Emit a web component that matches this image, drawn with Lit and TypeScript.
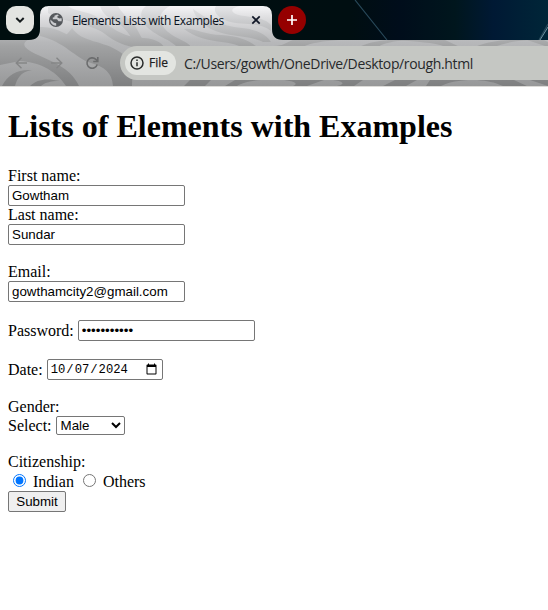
import { LitElement, html, css, svg } from "lit";
import { customElement } from "lit/decorators.js";

const frame =
  "M0 40H29Q40 40 40 29V15Q40 6 49 6H263Q272 6 272 15V29Q272 40 283 40H548V86H0Z";

const swirls = [
  "M40 27C58 26 70 38 86 43C100 48 116 51 122 63L127 86H113C112 72 104 67 91 63C75 58 65 42 40 36Z",
  "M0 40H28C20 44 26 50 38 55C56 63 72 70 79 86H66C55 69 37 62 20 61L0 65Z",
  "M63 38C67 34 70 31 72 28C82 43 103 40 120 52C132 60 133 70 132 86H126C124 69 115 61 100 56C86 52 76 43 63 38Z",
  "M48 6H68C75 12 90 11 98 18C112 27 120 37 144 38C158 39 163 44 166 50H151C134 47 121 47 105 34C91 23 67 24 48 13Z",
  "M100 6H118C123 16 133 20 138 31C143 42 149 47 157 51H142C133 41 128 30 118 23C109 18 103 15 100 6Z",
  "M146 6H170C157 13 158 23 168 32C178 40 188 41 192 48H178C170 38 147 34 142 19C140 13 142 9 146 6Z",
  "M184 29C193 27 205 35 221 35C239 36 251 41 258 48H243C229 39 205 45 184 29Z",
  "M193 9C205 18 221 26 242 28C256 29 267 35 271 42H263C248 34 220 38 205 25C199 20 194 15 193 9Z",
  "M216 6H240C226 9 233 15 245 16C258 18 266 19 271 25V31C258 21 242 26 227 21C219 18 212 12 216 6Z",
  "M2 86C8 74 18 69 32 70C20 72 17 79 15 86Z",
  "M30 86C37 79 47 78 60 81C50 81 44 83 41 86Z",
  "M274 46C283 46 287 42 293 40H339C324 41 310 43 303 47Z",
  "M359 47C370 42 381 40 393 40H408C394 41 384 43 378 47Z",
  "M399 40H445L460 47H446C433 42 416 42 399 40Z",
  "M475 47C487 42 499 40 514 40H530C515 41 504 43 494 47Z",
  "M527 40H544L548 42V47Z",
  "M190 80H211L205 86H184Z",
  "M235 80H261C249 81 242 83 237 86H225Z",
  "M284 80H324L307 86H293C300 83 292 81 284 80Z",
  "M333 80H363L354 86H337C347 84 342 81 333 80Z",
  "M395 80H417L406 86H383Z",
  "M430 80H468C454 81 447 83 441 86H426Z",
  "M477 80H514L527 86H503C494 82 487 81 477 80Z",
  "M530 80H548V86Z",
];

@customElement("app-root")
export class AppRoot extends LitElement {
  static styles = css`
    :host {
      display: block;
      width: 548px;
      height: 610px;
      overflow: hidden;
      background: #fff;
      color: #000;
      font: 16px/18px "Liberation Serif", serif;
    }
    * { box-sizing: border-box; }
    .chrome { position: relative; height: 87px; border-bottom: 1px solid #dcdbd8; font-family: "Open Sans", "Noto Sans", sans-serif; }
    .theme { position: absolute; inset: 0; display: block; }
    .bar { position: relative; display: flex; align-items: center; }
    .tabs { height: 40px; padding-left: 6px; }
    .search { display: grid; place-items: center; width: 28px; height: 28px; border-radius: 10px; background: #e3e5e1; }
    .tab { display: flex; align-items: center; width: 232px; height: 34px; margin: 0 4px 0 6px; padding-left: 9px; color: #071020; }
    .title { width: 179px; margin-left: 9px; padding-top: 1px; font-size: 12px; letter-spacing: -0.42px; white-space: nowrap; }
    .add { display: grid; place-items: center; width: 28px; height: 28px; margin-left: 2px; border-radius: 50%; background: #950000; }
    .tools { height: 46px; padding-left: 15px; }
    .nav { width: 14px; height: 14px; margin-right: 21px; flex: none; }
    .address { display: flex; align-items: center; flex: 1; height: 34px; border-radius: 17px 0 0 17px; background: #c5c7c3; padding-left: 5px; }
    .file { display: flex; align-items: center; width: 51px; height: 24px; border-radius: 12px; background: #e3e5e1; padding-left: 5px; font-size: 12px; color: #1f2021; -webkit-text-stroke: 0.25px; }
    .file svg { margin-right: 5px; flex: none; }
    .url { margin-left: 8px; padding-top: 1px; font-size: 14px; color: #27292b; letter-spacing: -0.36px; white-space: nowrap; }
    svg { display: block; }
    .page { padding: 21px 8px 0; }
    h1 { margin: 0 0 22px; font-size: 32px; line-height: 37px; font-weight: 700; white-space: nowrap; }
    .row { display: flex; align-items: center; height: 21px; }
    .short { height: 19px; }
    .gap { margin-top: 18px; }
    .label { height: 18px; }
    .row .name { margin-right: 4px; }
    input, select, button { margin: 0; font: 13.333px "Liberation Sans", sans-serif; color: #000; }
    .field { width: 177px; height: 21px; padding: 1px 3px; border: 1px solid #767676; border-radius: 2px; background: #fff; }
    .date { width: 116px; padding: 1px 2px; font: 12.2px "Liberation Mono", monospace; }
    select { width: 69px; height: 19px; border: 1px solid #767676; border-radius: 2px; background: #fff; }
    .radio { width: 13px; height: 13px; margin: 0 7px 2px 5px; }
    .radios { height: 20px; }
    .radios .name { margin-right: 4px; padding-top: 2px; }
    button { display: block; width: 58px; height: 21px; padding: 0; border: 1px solid #767676; border-radius: 2px; background: #efefef; }
  `;

  render() {
    return html`
      <div class="chrome">
        <svg class="theme" width="548" height="86" viewBox="0 0 548 86">
          <defs>
            <linearGradient id="night" x1="0" x2="1">
              <stop offset="0" stop-color="#000e0f" /><stop offset=".64" stop-color="#000e11" />
              <stop offset=".73" stop-color="#000d1b" /><stop offset=".83" stop-color="#00161d" />
              <stop offset=".9" stop-color="#001934" /><stop offset="1" stop-color="#002638" />
            </linearGradient>
            <linearGradient id="silver" gradientUnits="userSpaceOnUse" x1="0" y1="6" x2="0" y2="86">
              <stop offset="0" stop-color="#f5f5f7" /><stop offset=".14" stop-color="#dfdfe1" />
              <stop offset=".45" stop-color="#b7b8ba" /><stop offset="1" stop-color="#979899" />
            </linearGradient>
            <linearGradient id="shade" gradientUnits="userSpaceOnUse" x1="0" y1="6" x2="0" y2="86">
              <stop offset="0" stop-color="#e6e6e8" /><stop offset=".2" stop-color="#c9cacc" />
              <stop offset=".5" stop-color="#a1a2a3" /><stop offset="1" stop-color="#7e7f80" />
            </linearGradient>
            <clipPath id="shape"><path d=${frame} /></clipPath>
          </defs>
          <rect width="548" height="60" fill="url(#night)" />
          <path d="M355 0L387 40M548 24L539 40" stroke="#28495a" stroke-width="1.2" />
          <path d="M548 27L540 40" stroke="#7195a4" />
          <path d=${frame} fill="url(#silver)" />
          <g clip-path="url(#shape)" fill="url(#shade)">${swirls.map((d) => svg`<path d=${d} />`)}</g>
        </svg>
        <div class="bar tabs">
          <div class="search">
            <svg width="10" height="8" viewBox="0 0 10 8" fill="none" stroke="#151b1c" stroke-width="2"><path d="M1.3 2L5 5.7L8.7 2" /></svg>
          </div>
          <div class="tab">
            <svg width="14" height="14" viewBox="0 0 14 14">
              <circle cx="7" cy="7" r="7" fill="#55585c" />
              <path d="M8.2 1.4L5.4 2.8V4.2L3.8 4.5V6.2H8L9.5 8.2H12.6A5.7 5.7 0 0 0 12.4 5.1L10.7 5.5L8.4 4.6V3.2L10 2.2ZM1.3 6.5L5 9.8L7.2 10.2V12.7A5.7 5.7 0 0 1 1.3 6.5Z" fill="#cacbce" />
            </svg>
            <span class="title">Elements Lists with Examples</span>
            <svg width="10" height="10" viewBox="0 0 10 10" stroke="#101727" stroke-width="1.7"><path d="M1.3 1.3L8.7 8.7M8.7 1.3L1.3 8.7" /></svg>
          </div>
          <div class="add">
            <svg width="12" height="12" viewBox="0 0 12 12" stroke="#fff" stroke-width="1.7"><path d="M6 1V11M1 6H11" /></svg>
          </div>
        </div>
        <div class="bar tools">
          <svg class="nav" viewBox="0 0 14 14" fill="none" stroke="#858687" stroke-width="1.4"><path d="M12 7H1.2M6.5 1.7L1.2 7L6.5 12.3" /></svg>
          <svg class="nav" viewBox="0 0 14 14" fill="none" stroke="#858687" stroke-width="1.4"><path d="M1 7H11.8M6.5 1.7L11.8 7L6.5 12.3" /></svg>
          <svg class="nav" viewBox="0 0 14 14" fill="none" stroke="#6b6c6d" stroke-width="1.6"><path d="M12.2 8.5A5.2 5.2 0 1 1 10.8 3.3L12.3 4.9M12.8 1V5.5H8.2" /></svg>
          <div class="address">
            <div class="file">
              <svg width="14" height="14" viewBox="0 0 14 14" fill="none" stroke="#292b2a" stroke-width="1.5"><circle cx="7" cy="7" r="6" /><path d="M7 6.2V10.3M7 3.5V5" /></svg>
              File
            </div>
            <span class="url">C:/Users/gowth/OneDrive/Desktop/rough.html</span>
          </div>
        </div>
      </div>
      <div class="page">
        <h1>Lists of Elements with Examples</h1>
        <div class="label">First name:</div>
        <div class="row"><input class="field" value="Gowtham" /></div>
        <div class="label">Last name:</div>
        <div class="row"><input class="field" value="Sundar" /></div>
        <div class="label gap">Email:</div>
        <div class="row"><input class="field" value="gowthamcity2@gmail.com" /></div>
        <div class="row gap"><span class="name">Password:</span><input class="field" type="password" value="abcdefghijk" /></div>
        <div class="row gap"><span class="name">Date:</span><input class="field date" type="date" value="2024-10-07" /></div>
        <div class="label gap">Gender:</div>
        <div class="row short"><span class="name">Select:</span><select><option>Male</option><option>Female</option></select></div>
        <div class="label gap">Citizenship:</div>
        <div class="row radios">
          <input class="radio" type="radio" name="c" checked /><span class="name">Indian</span>
          <input class="radio" type="radio" name="c" /><span class="name">Others</span>
        </div>
        <button>Submit</button>
      </div>
    `;
  }
}
